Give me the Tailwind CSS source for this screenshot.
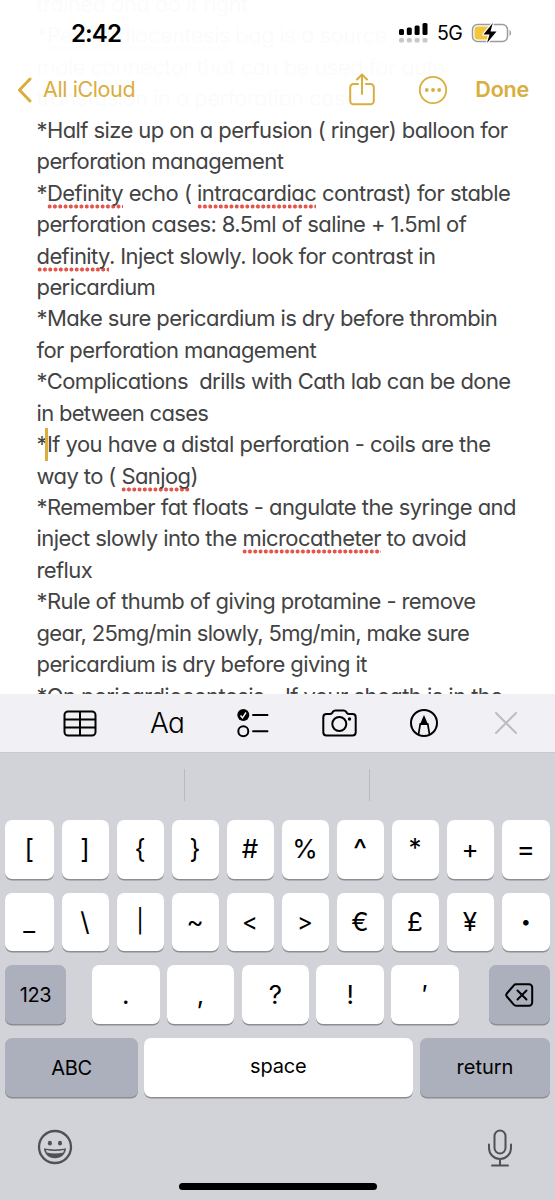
<!DOCTYPE html>
<html lang="en">
<head>
<meta charset="utf-8">
<title>Notes</title>
<script src="https://cdn.jsdelivr.net/npm/@tailwindcss/browser@4"></script>
</head>
<body class="w-[555px] h-[1200px] overflow-hidden bg-white font-['Inter','Liberation_Sans',sans-serif] text-black">
<div class="relative flex flex-col w-[555px] h-[1200px] overflow-hidden">

  <main class="h-[694px] shrink-0 overflow-hidden pl-[36.500px] text-[22px] tracking-[-0.59px] leading-[31.43px] text-[#434343] [font-feature-settings:'cv11']">
    <div class="-mt-[11px] *:whitespace-pre">
      <div>trained and do it right</div>
      <div>*<span class="pb-[3px] bg-[radial-gradient(circle,#e2564c_1.8px,transparent_2.3px)] bg-[length:5.3px_5px] bg-repeat-x bg-bottom-left">Pericardiocentesis</span> bag is a source</div>
      <div>male connector that can be used for auto</div>
      <div>transfusion in a perforation case</div>
      <div>*Half size up on a perfusion ( ringer) balloon for</div>
      <div>perforation management</div>
      <div class="tracking-[-0.54px]">*<span class="pb-[3px] bg-[radial-gradient(circle,#e2564c_1.8px,transparent_2.3px)] bg-[length:5.3px_5px] bg-repeat-x bg-bottom-left">Definity</span> echo ( <span class="pb-[3px] bg-[radial-gradient(circle,#e2564c_1.8px,transparent_2.3px)] bg-[length:5.3px_5px] bg-repeat-x bg-bottom-left">intracardiac</span> contrast) for stable</div>
      <div>perforation cases: 8.5ml of saline + 1.5ml of</div>
      <div><span class="pb-[3px] bg-[radial-gradient(circle,#e2564c_1.8px,transparent_2.3px)] bg-[length:5.3px_5px] bg-repeat-x bg-bottom-left">definity</span>. Inject slowly. look for contrast in</div>
      <div>pericardium</div>
      <div class="tracking-[-0.61px]">*Make sure pericardium is dry before thrombin</div>
      <div>for perforation management</div>
      <div>*Complications  drills with Cath lab can be done</div>
      <div class="tracking-[-0.7px]">in between cases</div>
      <div class="tracking-[-0.55px]">*<span class="relative"><i class="absolute -left-[2px] -top-[3px] w-[3px] h-[33px] bg-[#d9ae3c]"></i></span>If you have a distal perforation - coils are the</div>
      <div>way to ( <span class="pb-[3px] bg-[radial-gradient(circle,#e2564c_1.8px,transparent_2.3px)] bg-[length:5.3px_5px] bg-repeat-x bg-bottom-left">Sanjog</span>)</div>
      <div class="tracking-[-0.56px]">*Remember fat floats - angulate the syringe and</div>
      <div class="tracking-[-0.53px]">inject slowly into the <span class="pb-[3px] bg-[radial-gradient(circle,#e2564c_1.8px,transparent_2.3px)] bg-[length:5.3px_5px] bg-repeat-x bg-bottom-left">microcatheter</span> to avoid</div>
      <div>reflux</div>
      <div>*Rule of thumb of giving protamine - remove</div>
      <div class="tracking-[-0.68px]">gear, 25mg/min slowly, 5mg/min, make sure</div>
      <div>pericardium is dry before giving it</div>
      <div class="tracking-[-0.55px]">*On pericardiocentesis - If your sheath is in the</div>
    </div>
  </main>

  <header class="absolute inset-x-0 top-0 h-[113px] bg-white/98">
    <div class="flex items-center h-[66px] pl-[71px] pr-[42px]">
      <div class="mt-[1px] text-[24px] font-semibold leading-none tracking-[-0.9px]">2:42</div>
      <svg class="ml-auto" width="29" height="20" viewBox="0 0 29 20"><g fill="#000"><rect x="0" y="6" width="5" height="6" rx="1.5"/><rect x="7.8" y="4.5" width="5" height="7.5" rx="1.5"/><rect x="15.600" y="2.500" width="5" height="9.500" rx="1.500"/><rect x="23.500" y="0" width="5" height="12" rx="1.500"/></g><g fill="#c8c8c8"><rect x="0" y="15" width="5" height="4.500" rx="1.500"/><rect x="7.800" y="15" width="5" height="4.500" rx="1.500"/><rect x="15.600" y="15" width="5" height="4.500" rx="1.500"/><rect x="23.500" y="15" width="5" height="4.500" rx="1.500"/></g></svg>
      <div class="ml-[9px] mt-[2px] w-[25px] text-[19.500px] leading-none tracking-[-0.5px]">5G</div>
      <svg class="ml-[9px]" width="42" height="22" viewBox="0 0 42 22"><rect x="1.500" y="2.500" width="35" height="17" rx="5" fill="#fff" stroke="#9b9b9b" stroke-width="1.500"/><path d="M6.500 4.500H18v13H6.500a3 3 0 0 1-3-3v-7a3 3 0 0 1 3-3z" fill="#f2c53d"/><path d="M38.500 8v6c2-.8 2-5.200 0-6z" fill="#9b9b9b"/><path d="M21.800 1 12.500 12.500h6l-2.500 8.500L25.500 9.500h-6z" fill="#000" stroke="#fff" stroke-width="2.500" paint-order="stroke" stroke-linejoin="round"/></svg>
    </div>
    <div class="flex items-center h-[47px] pl-[17px] pr-[26px] text-[#d9ae3c]">
      <svg width="15" height="26" viewBox="0 0 15 26" fill="none" stroke="currentColor" stroke-width="3" stroke-linecap="round" stroke-linejoin="round"><path d="M13 2 2.500 13 13 24"/></svg>
      <div class="ml-[11px] text-[21.500px] leading-none tracking-[-0.4px]">All iCloud</div>
      <svg class="ml-auto" width="26" height="33" viewBox="0 0 26 33" fill="none" stroke="currentColor" stroke-width="2" stroke-linecap="round" stroke-linejoin="round"><path d="M9 11H4.500A3.300 3.300 0 0 0 1.200 14.300V28a3.300 3.300 0 0 0 3.300 3.300h17a3.300 3.300 0 0 0 3.300-3.300V14.300A3.300 3.300 0 0 0 21.500 11H17M13 21V2M8 6.500 13 1.500l5 5"/></svg>
      <svg class="ml-[43px]" width="30" height="30" viewBox="0 0 30 30" fill="none"><circle cx="15" cy="15" r="13.200" stroke="currentColor" stroke-width="1.800"/><g fill="currentColor"><circle cx="8.800" cy="15" r="1.900"/><circle cx="15" cy="15" r="1.900"/><circle cx="21.200" cy="15" r="1.900"/></g></svg>
      <div class="ml-[27px] text-[21.500px] font-semibold leading-none tracking-[-0.2px]">Done</div>
    </div>
  </header>

  <div class="flex items-center h-[58px] shrink-0 pl-[63px] pr-[37px] bg-[#f1f0f5]">
    <svg width="34" height="27" viewBox="0 0 34 27" fill="none" stroke="#000" stroke-width="2"><rect x="1.500" y="1.500" width="31" height="24" rx="3.500"/><path d="M17 1.500v24M1.500 9.500h31M1.500 17.500h31"/></svg>
    <div class="ml-[53px] w-[36px] text-[28px] font-light leading-none tracking-[-0.8px] [font-feature-settings:'cv11']">Aa</div>
    <svg class="ml-[51px]" width="32" height="30" viewBox="0 0 32 30" fill="none" stroke="#000" stroke-width="2"><circle cx="6.300" cy="7" r="6" fill="#000" stroke="none"/><path d="m3.500 7.500 2 2.300 3.500-5.300" stroke="#fff" stroke-width="1.400"/><circle cx="6.300" cy="23.300" r="5"/><path d="M16 7h14.500M16 23.300h14.500" stroke-linecap="round"/></svg>
    <svg class="ml-[53px]" width="35" height="28" viewBox="0 0 35 28" fill="none" stroke="#000" stroke-width="2"><path d="M4.500 5H8c1 0 1.500-.3 2.200-1.200l.8-1.200C11.600 1.800 12.300 1.500 13.300 1.500h8.400c1 0 1.700.3 2.300 1.100l.8 1.200C25.500 4.700 26 5 27 5h3.500c2 0 3.200 1.200 3.200 3.200v15c0 2-1.200 3.200-3.200 3.200h-26c-2 0-3.200-1.200-3.200-3.200v-15C1.300 6.200 2.500 5 4.500 5z"/><circle cx="17.300" cy="15" r="7"/><circle cx="27.500" cy="10" r="1.700" fill="#000" stroke="none"/></svg>
    <svg class="ml-[52px]" width="30" height="30" viewBox="0 0 30 30" fill="none" stroke="#000" stroke-width="2"><circle cx="15" cy="15" r="13"/><path d="M9.500 26.500 11.200 16h7.600l1.700 10.500" stroke-width="1.700"/><path d="M15 7 10.700 17h8.600z" fill="#000" stroke="none"/></svg>
    <svg class="ml-auto" width="24" height="24" viewBox="0 0 24 24" stroke="#bcbcc1" stroke-width="2" stroke-linecap="round"><path d="m2 2 20 20M22 2 2 22"/></svg>
  </div>

  <section class="flex-1 flex flex-col bg-[#d1d3d9] border-t border-[#c8c9ce]">
    <div class="flex h-[67px] shrink-0 pt-[16px]">
      <div class="w-[185px] h-[32px] border-r border-[#b8bac0]"></div>
      <div class="w-[185px] h-[32px] border-r border-[#b8bac0]"></div>
    </div>
    <div class="flex flex-col gap-[14.200px] px-[5px] text-[26px] leading-none">
      <div class="grid grid-cols-[48.5px_repeat(8,47px)_48.5px] gap-[8px] h-[58.500px] *:flex *:items-center *:justify-center *:bg-white *:rounded-[7px] *:shadow-[0_1.500px_0_#8b8d92]">
        <div>[</div><div>]</div><div>{</div><div>}</div><div>#</div><div>%</div><div class="text-[30px]">^</div><div class="pb-[2px]">*</div><div>+</div><div class="text-[28px]">=</div>
      </div>
      <div class="grid grid-cols-[48.5px_repeat(8,47px)_48.5px] gap-[8px] h-[58.500px] *:flex *:items-center *:justify-center *:bg-white *:rounded-[7px] *:shadow-[0_1.500px_0_#8b8d92]">
        <div>_</div><div>\</div><div class="text-[23px]">|</div><div>~</div><div class="text-[24px]">&lt;</div><div class="text-[24px]">&gt;</div><div>€</div><div>£</div><div>¥</div><div class="text-[18px]">•</div>
      </div>
      <div class="flex h-[58.500px] *:flex *:items-center *:justify-center *:rounded-[7px] *:shadow-[0_1.500px_0_#8b8d92]">
        <div class="w-[61px] bg-[#abb0bc] text-[20px] tracking-[-0.4px]">123</div>
        <div class="ml-[26px] w-[67.500px] bg-white">.</div>
        <div class="ml-[7.300px] w-[67.500px] bg-white">,</div>
        <div class="ml-[7.300px] w-[67.500px] bg-white">?</div>
        <div class="ml-[7.300px] w-[67.500px] bg-white">!</div>
        <div class="ml-[7.300px] w-[67.500px] bg-white">′</div>
        <div class="ml-auto w-[61px] bg-[#abb0bc]"><svg width="29" height="24" viewBox="0 0 29 24" fill="none" stroke="#000" stroke-width="2" stroke-linejoin="round" stroke-linecap="round"><path d="M11 1.300H24a3.200 3.200 0 0 1 3.200 3.200v15a3.200 3.200 0 0 1-3.200 3.200H11a3 3 0 0 1-2.200-1L1.800 13.500c-.8-1-.8-2 0-3l7-8.200a3 3 0 0 1 2.200-1z"/><path d="m12.500 7.500 9 9M21.500 7.500l-9 9"/></svg></div>
      </div>
      <div class="flex h-[58.500px] text-[20px] *:flex *:items-center *:justify-center *:rounded-[7px] *:shadow-[0_1.500px_0_#8b8d92]">
        <div class="w-[133px] bg-[#abb0bc] pt-[2px] tracking-[-0.3px]">ABC</div>
        <div class="ml-[6px] w-[268.500px] bg-white pb-[3px] tracking-[-0.2px]">space</div>
        <div class="ml-auto w-[130px] bg-[#abb0bc]">return</div>
      </div>
    </div>
    <div class="flex justify-between pl-[37px] pr-[42px] pt-[32.500px]">
      <svg width="36" height="36" viewBox="0 0 36 36" fill="none"><circle cx="18" cy="18" r="16" stroke="#505157" stroke-width="2.300"/><ellipse cx="12.900" cy="14.200" rx="2" ry="2.400" fill="#505157"/><ellipse cx="23" cy="14.200" rx="2" ry="2.400" fill="#505157"/><path d="M7 19.300c6 1.500 16 1.500 22 0-.3 6-4.800 10-11 10s-10.700-4-11-10z" fill="#505157"/><path d="M9 21.100c5.500 1.200 12.500 1.200 18 0l-.7 2.400c-5 1.200-11.600 1.200-16.600 0z" fill="#d1d3d9"/></svg>
      <svg width="26" height="38" viewBox="0 0 26 38" fill="none" stroke="#505157" stroke-width="2" stroke-linecap="round"><rect x="7.500" y="1.500" width="11" height="23" rx="5.500"/><path d="M2 15.500v3.500a11 11 0 0 0 22 0v-3.500M13 30v6.500M5 36.500h16"/></svg>
    </div>
  </section>

  <div class="absolute left-[179px] top-[1183px] w-[198px] h-[6.500px] rounded-full bg-black"></div>
</div>
</body>
</html>
